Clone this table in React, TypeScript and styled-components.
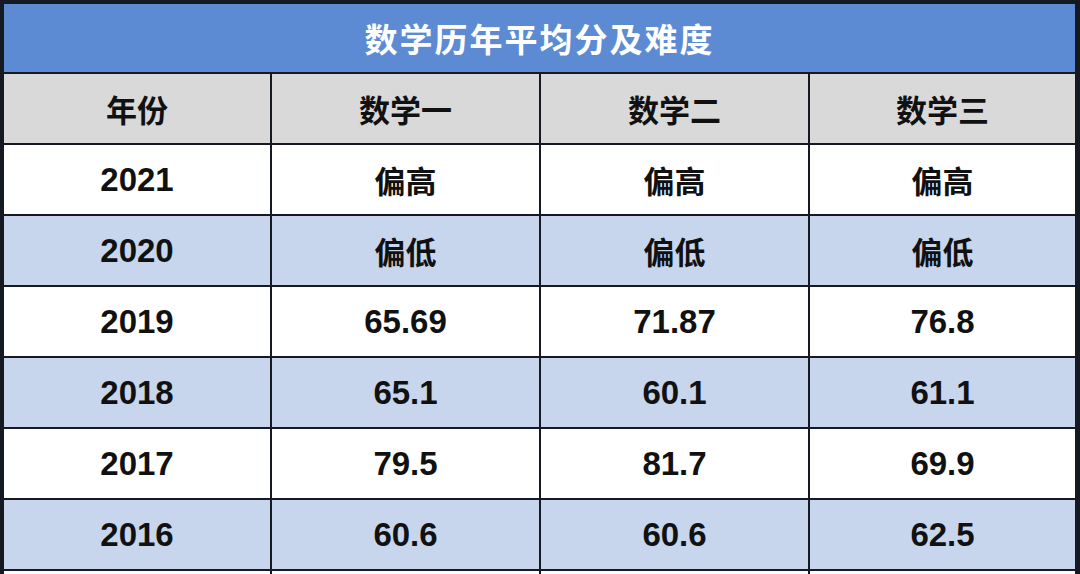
import React from 'react'
import styled, { createGlobalStyle } from 'styled-components'

interface ScoreRow {
  year: string
  math1: string
  math2: string
  math3: string
}

const rows: ScoreRow[] = [
  { year: '2021', math1: '偏高', math2: '偏高', math3: '偏高' },
  { year: '2020', math1: '偏低', math2: '偏低', math3: '偏低' },
  { year: '2019', math1: '65.69', math2: '71.87', math3: '76.8' },
  { year: '2018', math1: '65.1', math2: '60.1', math3: '61.1' },
  { year: '2017', math1: '79.5', math2: '81.7', math3: '69.9' },
  { year: '2016', math1: '60.6', math2: '60.6', math3: '62.5' },
]

const headers = ['年份', '数学一', '数学二', '数学三']

export default function App(): JSX.Element {
  return (
    <>
      <GlobalStyle />
      <Table>
        <Title>数学历年平均分及难度</Title>
        {headers.map((h) => (
          <HeadCell key={h}>{h}</HeadCell>
        ))}
        {rows.map((row, idx) => (
          <React.Fragment key={row.year}>
            <Cell $shaded={idx % 2 === 1}>{row.year}</Cell>
            <Cell $shaded={idx % 2 === 1} $cjk={isNaN(Number(row.math1))}>
              {row.math1}
            </Cell>
            <Cell $shaded={idx % 2 === 1} $cjk={isNaN(Number(row.math2))}>
              {row.math2}
            </Cell>
            <Cell $shaded={idx % 2 === 1} $cjk={isNaN(Number(row.math3))}>
              {row.math3}
            </Cell>
          </React.Fragment>
        ))}
        {headers.map((h) => (
          <Cell key={`tail-${h}`} $shaded={false} />
        ))}
      </Table>
    </>
  )
}

const GlobalStyle = createGlobalStyle`
  html, body {
    margin: 0;
    padding: 0;
    width: 1080px;
    height: 574px;
    overflow: hidden;
    background: #ffffff;
  }
`

const Table = styled.div`
  display: grid;
  grid-template-columns: 266px 267px 267px 1fr;
  grid-template-rows: 68px;
  grid-auto-rows: 69px;
  gap: 2px;
  padding: 4px 5px 0 4px;
  width: 1080px;
  box-sizing: border-box;
  background: #151922;
  font-family: 'Liberation Sans', 'Noto Sans CJK SC', sans-serif;
`

const Title = styled.div`
  grid-column: 1 / -1;
  display: flex;
  align-items: center;
  justify-content: center;
  background: #5c8bd4;
  color: #ffffff;
  font-family: 'Noto Sans CJK SC', sans-serif;
  font-weight: 700;
  font-size: 33px;
  letter-spacing: 2px;
`

const HeadCell = styled.div`
  display: flex;
  align-items: center;
  justify-content: center;
  background: #d9d9d9;
  color: #111111;
  font-family: 'Noto Sans CJK SC', sans-serif;
  font-weight: 700;
  font-size: 31px;
`

const Cell = styled.div<{ $shaded: boolean; $cjk?: boolean }>`
  display: flex;
  align-items: center;
  justify-content: center;
  background: ${(p) => (p.$shaded ? '#c7d6ed' : '#ffffff')};
  color: #111111;
  font-family: ${(p) =>
    p.$cjk ? "'Noto Sans CJK SC', sans-serif" : "'Liberation Sans', sans-serif"};
  font-weight: ${(p) => (p.$cjk ? 600 : 700)};
  font-size: ${(p) => (p.$cjk ? '31px' : '33px')};
`
